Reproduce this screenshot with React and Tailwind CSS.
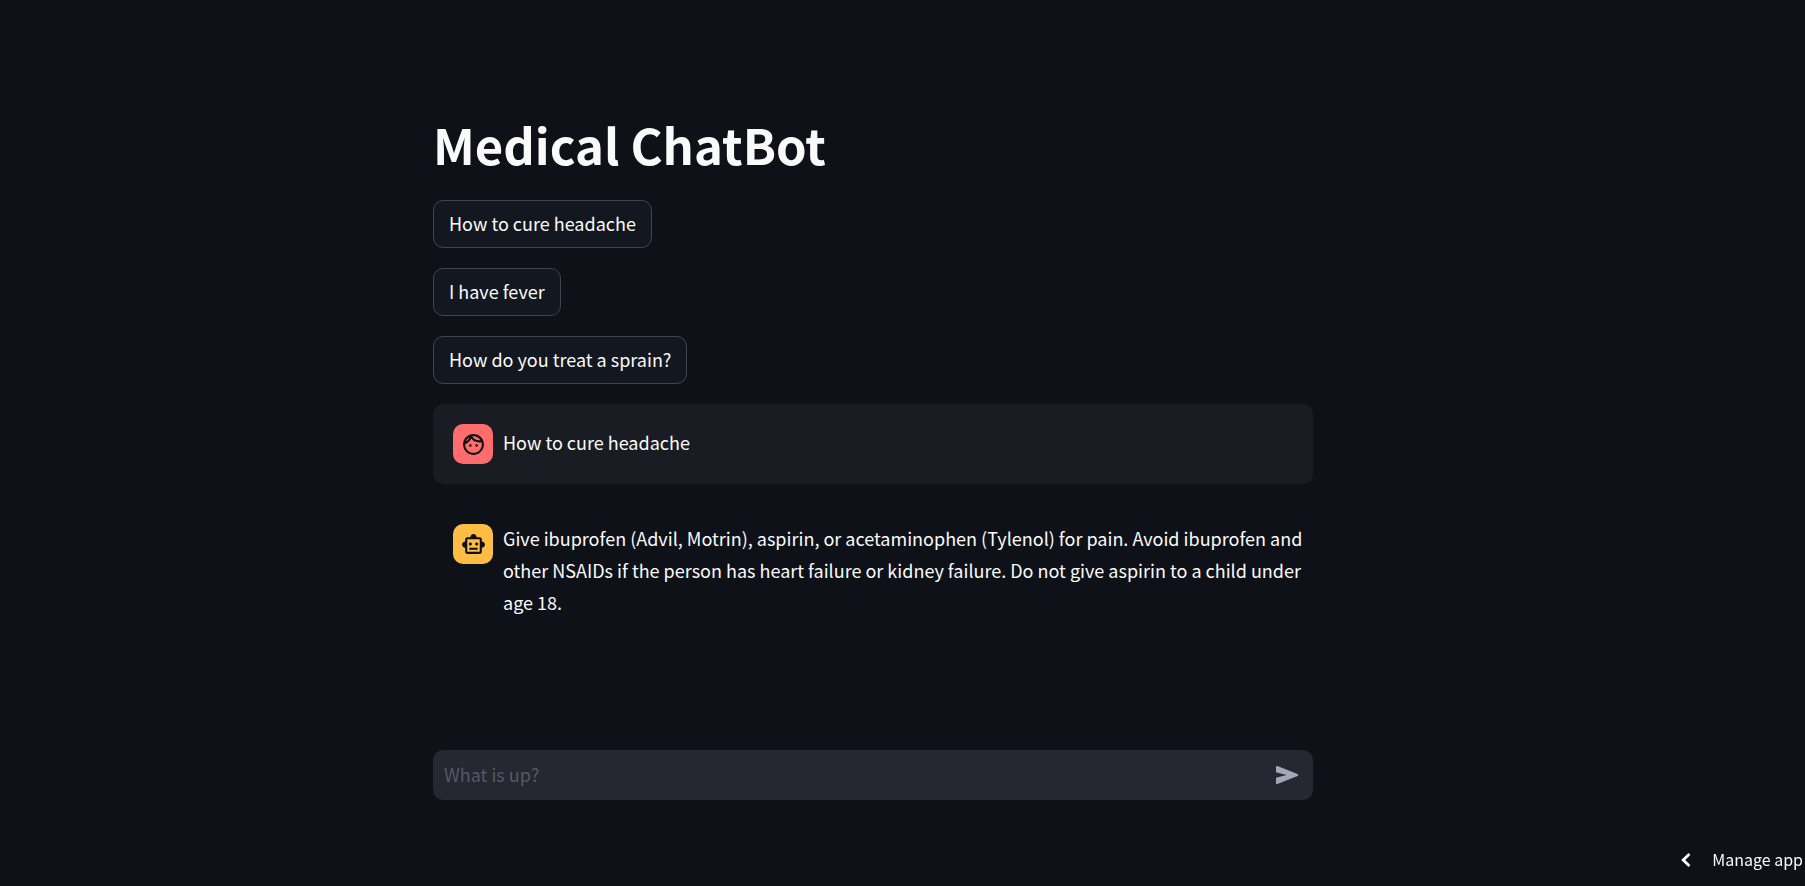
import { MdOutlineFace, MdOutlineSmartToy } from "react-icons/md";

const suggestions = ["How to cure headache", "I have fever", "How do you treat a sprain?"];

const messages = [
  { role: "user", text: "How to cure headache" },
  {
    role: "assistant",
    text: "Give ibuprofen (Advil, Motrin), aspirin, or acetaminophen (Tylenol) for pain. Avoid ibuprofen and other NSAIDs if the person has heart failure or kidney failure. Do not give aspirin to a child under age 18.",
  },
];

function Message({ role, text }) {
  const isUser = role === "user";
  const Icon = isUser ? MdOutlineFace : MdOutlineSmartToy;
  return (
    <article className={`flex items-start gap-2.5 rounded-[10px] py-5 pr-2 pl-5 ${isUser ? "bg-[#1a1c24]" : ""}`}>
      <div
        className={`flex size-10 shrink-0 items-center justify-center rounded-[10px] text-[#0e1117] ${
          isUser ? "bg-[#ff6c6c]" : "bg-[#ffbd45]"
        }`}
      >
        <Icon className="size-[25px]" aria-hidden="true" />
      </div>
      <div className="-mt-0.5 flex min-h-10 min-w-0 flex-1 items-center">
        <p className="leading-8">{text}</p>
      </div>
    </article>
  );
}

function SendIcon() {
  return (
    <svg viewBox="0 0 24 20" className="h-5 w-6" fill="currentColor" aria-hidden="true">
      <path d="M1 2.1C1 1.3 1.7.8 2.4 1.1L22.6 9.1c.8.4.8 1.4 0 1.8L2.4 18.9C1.7 19.2 1 18.7 1 17.9V12.7L11.5 10 1 7.3Z" />
    </svg>
  );
}

function ChevronIcon() {
  return (
    <svg viewBox="0 0 28 28" className="size-7" fill="none" stroke="currentColor" strokeWidth="2.8" aria-hidden="true">
      <path d="M17.4 7.9 11.2 14l6.200 6.100" />
    </svg>
  );
}

export default function App() {
  return (
    <div className="flex min-h-screen flex-col bg-[#0e1117] pr-[59px] font-['Noto_Sans_CJK_SC',sans-serif] text-lg text-[#fafafa]">
      <main className="mx-auto flex w-full max-w-[880px] flex-1 flex-col pt-28 pb-[86px]">
        <h1 className="mb-6 text-[49px] leading-16 font-bold">Medical ChatBot</h1>
        <div className="flex flex-col items-start gap-5">
          {suggestions.map((label) => (
            <button
              key={label}
              type="button"
              className="flex h-12 items-center rounded-[10px] border border-[#41444c] bg-[#131720] px-[15px] pb-0.5 leading-8"
            >
              {label}
            </button>
          ))}
        </div>
        <section className="mt-5 flex flex-col gap-5" aria-label="Conversation">
          {messages.map((message) => (
            <Message key={message.text} {...message} />
          ))}
        </section>
        <form className="mt-auto flex h-[50px] items-center rounded-[10px] bg-[#262730] pr-3.5 pl-[11px]">
          <input
            type="text"
            aria-label="Message"
            placeholder="What is up?"
            className="h-full min-w-0 flex-1 bg-transparent pb-0.5 outline-none placeholder:text-[#555867]"
          />
          <button type="button" aria-label="Send" className="text-[#a3a8b8]">
            <SendIcon />
          </button>
        </form>
      </main>
      <button
        type="button"
        className="fixed right-0 bottom-0 flex h-[53px] items-center gap-3 pr-0.5 text-base"
      >
        <ChevronIcon />
        <span className="pb-0.5">Manage app</span>
      </button>
    </div>
  );
}
